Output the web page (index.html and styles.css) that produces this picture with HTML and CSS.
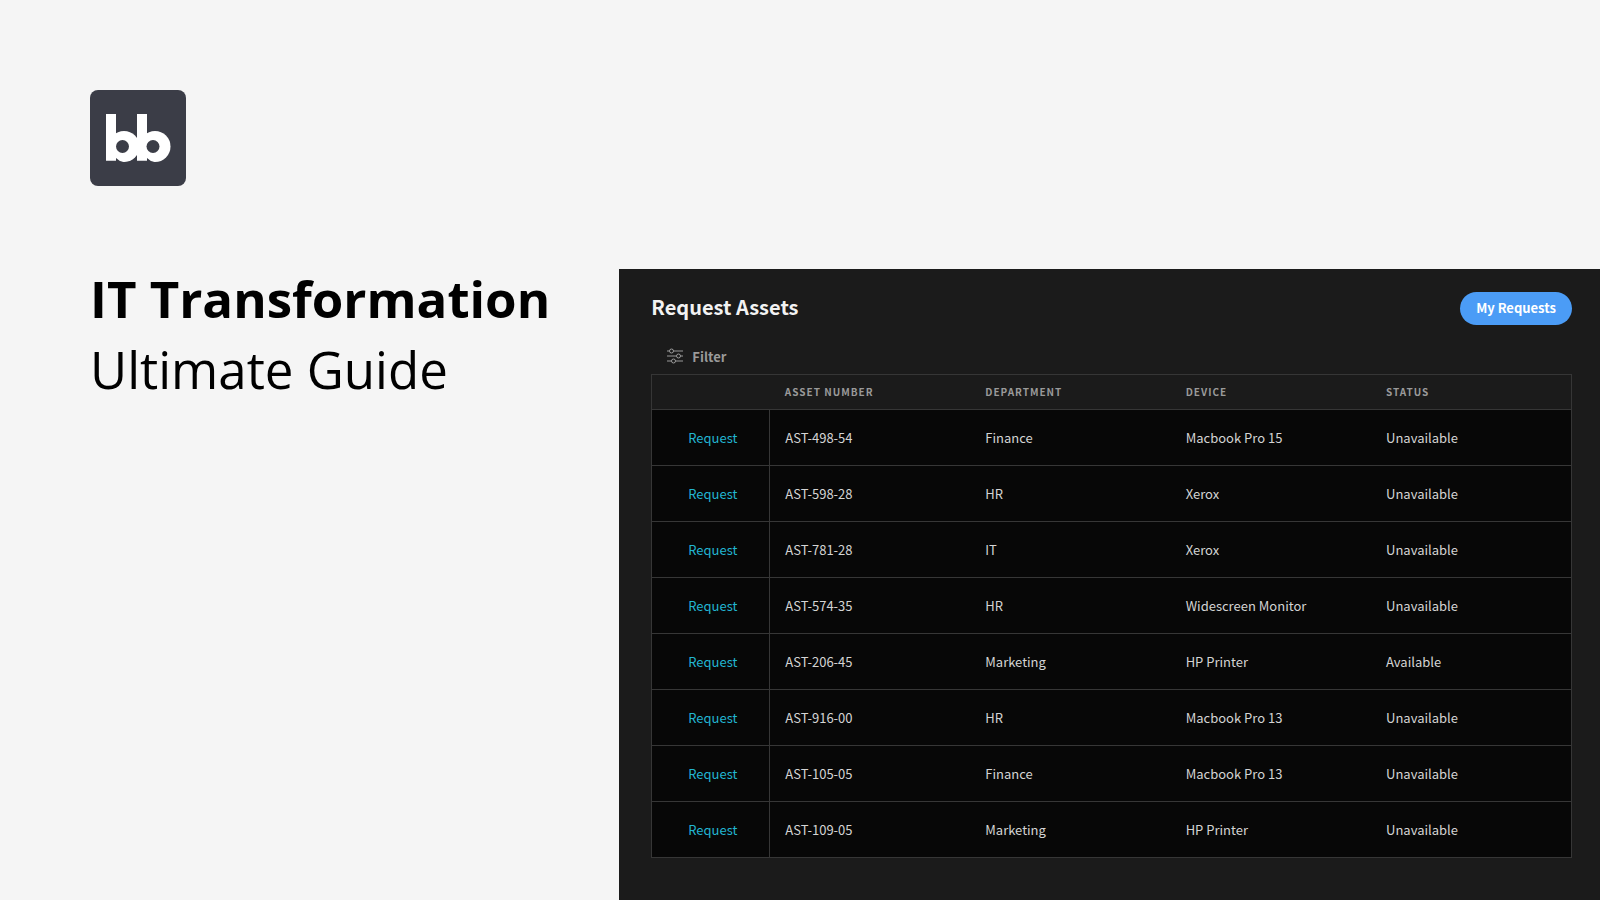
FILE: index.html
```
<!DOCTYPE html>
<html lang="en">
<head>
  <meta charset="UTF-8">
  <title>IT Transformation - Ultimate Guide</title>
  <link rel="stylesheet" href="styles.css">
</head>
<body>

  <header class="intro">
    <svg class="logo" viewBox="0 0 96 96" role="img" aria-label="bb">
      <rect width="96" height="96" rx="8" fill="#3b3d47"/>
      <g fill="#fff">
        <rect x="16" y="24" width="10" height="47"/>
        <rect x="47" y="24" width="10" height="47"/>
        <circle cx="34" cy="56.500" r="15.500"/>
        <circle cx="65" cy="56.500" r="15.500"/>
      </g>
      <g fill="#3b3d47">
        <path d="M15 70.800h11v-2.800q3 3 7 4h-18z"/>
        <path d="M35 72q7 0 12-5.500v4.300h10v-2.800q3 3 7 4z"/>
        <circle cx="32.500" cy="56.500" r="6.500"/>
        <circle cx="63" cy="56.500" r="6.500"/>
      </g>
    </svg>
    <h1>IT Transformation <span>Ultimate Guide</span></h1>
  </header>

  <main class="panel">
    <div class="panel-head">
      <h2>Request Assets</h2>
      <button class="my-requests" type="button">My Requests</button>
    </div>

    <button class="filter" type="button">
      <svg viewBox="0 0 16 16" fill="none" stroke="currentColor" aria-hidden="true">
        <path d="M0 3h2.500M6.500 3H16M0 8h9.500M13.500 8H16M0 13h4.500M8.500 13H16"/>
        <circle cx="4.500" cy="3" r="2"/>
        <circle cx="11.500" cy="8" r="2"/>
        <circle cx="6.500" cy="13" r="2"/>
      </svg>
      Filter
    </button>

    <table>
      <thead>
        <tr>
          <th class="action"></th>
          <th>Asset Number</th>
          <th>Department</th>
          <th>Device</th>
          <th>Status</th>
        </tr>
      </thead>
      <tbody>
        <tr>
          <td class="action"><a href="#">Request</a></td>
          <td>AST-498-54</td>
          <td>Finance</td>
          <td>Macbook Pro 15</td>
          <td>Unavailable</td>
        </tr>
        <tr>
          <td class="action"><a href="#">Request</a></td>
          <td>AST-598-28</td>
          <td>HR</td>
          <td>Xerox</td>
          <td>Unavailable</td>
        </tr>
        <tr>
          <td class="action"><a href="#">Request</a></td>
          <td>AST-781-28</td>
          <td>IT</td>
          <td>Xerox</td>
          <td>Unavailable</td>
        </tr>
        <tr>
          <td class="action"><a href="#">Request</a></td>
          <td>AST-574-35</td>
          <td>HR</td>
          <td>Widescreen Monitor</td>
          <td>Unavailable</td>
        </tr>
        <tr>
          <td class="action"><a href="#">Request</a></td>
          <td>AST-206-45</td>
          <td>Marketing</td>
          <td>HP Printer</td>
          <td>Available</td>
        </tr>
        <tr>
          <td class="action"><a href="#">Request</a></td>
          <td>AST-916-00</td>
          <td>HR</td>
          <td>Macbook Pro 13</td>
          <td>Unavailable</td>
        </tr>
        <tr>
          <td class="action"><a href="#">Request</a></td>
          <td>AST-105-05</td>
          <td>Finance</td>
          <td>Macbook Pro 13</td>
          <td>Unavailable</td>
        </tr>
        <tr>
          <td class="action"><a href="#">Request</a></td>
          <td>AST-109-05</td>
          <td>Marketing</td>
          <td>HP Printer</td>
          <td>Unavailable</td>
        </tr>
      </tbody>
    </table>
  </main>

</body>
</html>
```
FILE: styles.css
```
* {
  box-sizing: border-box;
}
body {
  margin: 0;
  min-height: 100vh;
  display: grid;
  grid-template-columns: minmax(0, 12fr) minmax(0, 19fr);
  background: #f5f5f5;
  font-family: "Noto Sans CJK SC", sans-serif;
}

/* left side */
.intro {
  padding: 90px 0 0 90px;
}
.logo {
  display: block;
  width: 96px;
  height: 96px;
}
h1 {
  margin: 77px 0 0;
  font-family: "Open Sans", sans-serif;
  font-size: 51px;
  line-height: 71px;
  font-weight: 700;
  color: #000;
  white-space: nowrap;
}
h1 span {
  display: block;
  font-weight: 400;
}

/* app panel */
.panel {
  margin-top: 269px;
  padding: 23px 28px 24px 32px;
  background: #1b1b1b;
  color: #d4d4d4;
}
.panel-head {
  display: flex;
  justify-content: space-between;
  align-items: flex-start;
}
h2 {
  margin: 0;
  font-size: 20px;
  line-height: 30px;
  font-weight: 700;
  color: #f2f2f2;
}
button {
  border: none;
  font-family: inherit;
  font-size: 13px;
  font-weight: 700;
  cursor: pointer;
}
.my-requests {
  height: 33px;
  padding: 0 16px 2px;
  border-radius: 17px;
  background: #4b9cf6;
  color: #fff;
}
.filter {
  display: flex;
  align-items: center;
  gap: 9px;
  height: 32px;
  margin: 15px 0 2px;
  padding: 0 16px;
  background: none;
  color: #9a9a9a;
}
.filter svg {
  width: 16px;
  height: 16px;
}

table {
  width: 100%;
  table-layout: fixed;
  border-collapse: collapse;
  border: 1px solid #363636;
}
th, td {
  padding: 0 0 1px 15px;
  text-align: left;
}
th {
  height: 35px;
  font-size: 10px;
  font-weight: 700;
  letter-spacing: 1px;
  text-transform: uppercase;
  color: #9a9a9a;
}
td {
  height: 56px;
  border-top: 1px solid #363636;
  background: #070707;
  font-size: 13px;
}
.action {
  width: 118px;
  padding-left: 4px;
  text-align: center;
}
td.action {
  border-right: 1px solid #363636;
}
td a {
  color: #22b4d1;
  text-decoration: none;
}
```
